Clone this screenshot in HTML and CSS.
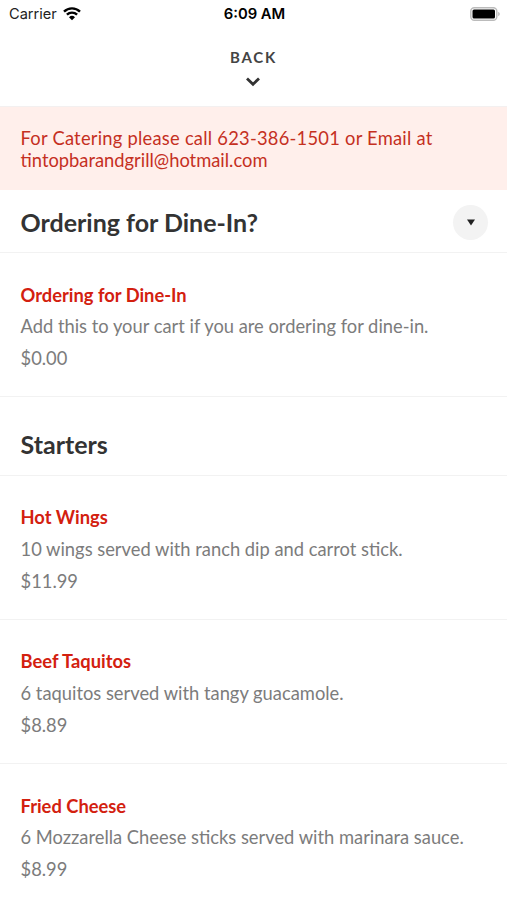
FILE: index.html
```html
<!DOCTYPE html>
<html lang="en">
<head>
  <meta charset="UTF-8">
  <title>Menu</title>
  <link rel="stylesheet" href="styles.css">
</head>
<body>
  <div class="status">
    <div class="carrier">
      <span>Carrier</span>
      <svg class="wifi" width="18" height="14" viewBox="0 0 18 14">
        <path d="M1 4.600a11.500 11.500 0 0 1 16 0M3.900 7.700a7.400 7.400 0 0 1 10.200 0" fill="none" stroke="#000" stroke-width="2.400"/>
        <path d="M9 13.200L6 10.200a4.300 4.300 0 0 1 6 0z"/>
      </svg>
    </div>
    <div class="time">6:09 AM</div>
    <svg class="battery" width="30" height="14" viewBox="0 0 30 14">
      <rect x=".8" y=".7" width="26" height="12.600" rx="3.500" fill="none" stroke="#bbb" stroke-width="1.400"/>
      <rect x="2.500" y="2.400" width="22.500" height="9.200" rx="1.500"/>
      <path d="M28.200 4.800q1.600.8 1.600 2.200t-1.600 2.200z" fill="#bbb"/>
    </svg>
  </div>

  <header class="header">
    <div class="back">BACK</div>
    <svg class="chevron" width="14" height="10" viewBox="0 0 14 10">
      <path d="M1 1.500l6 5.700 6-5.700" fill="none" stroke="#333" stroke-width="2.800"/>
    </svg>
  </header>

  <div class="notice"><span class="wide">For Catering please call 623-386-1501 or Email at</span> tintopbarandgrill@hotmail.com</div>

  <div class="section first">
    <h2>Ordering for Dine-In?</h2>
    <div class="toggle">
      <svg width="8" height="7" viewBox="0 0 8 7"><path d="M0 .5h8l-4 6z" fill="#222"/></svg>
    </div>
  </div>
  <div class="item">
    <h3>Ordering for Dine-In</h3>
    <p>Add this to your cart if you are ordering for dine-in.</p>
    <p>$0.00</p>
  </div>

  <div class="section">
    <h2>Starters</h2>
  </div>
  <div class="item">
    <h3>Hot Wings</h3>
    <p>10 wings served with ranch dip and carrot stick.</p>
    <p>$11.99</p>
  </div>
  <div class="item">
    <h3>Beef Taquitos</h3>
    <p>6 taquitos served with tangy guacamole.</p>
    <p>$8.89</p>
  </div>
  <div class="item">
    <h3>Fried Cheese</h3>
    <p>6 Mozzarella Cheese sticks served with marinara sauce.</p>
    <p>$8.99</p>
  </div>
</body>
</html>
```
FILE: styles.css
```css
* { box-sizing: border-box; }
body { margin: 0; height: 900px; overflow: hidden; background: #fff; color: #333; font-family: Lato, sans-serif; }
h2, h3, p { margin: 0; }
svg { display: block; }

/* status bar */
.status { display: grid; grid-template-columns: 1fr auto 1fr; align-items: center; height: 27px; padding: 0 7px 0 9px; color: #000; font: 14.6px/27px Inter, sans-serif; }
.carrier { display: flex; align-items: center; gap: 6px; }
.carrier span { padding-top: 1px; color: #222; line-height: 26px; }
.time { padding-top: 1px; font-weight: 600; font-size: 14.8px; line-height: 26px; }
.battery { justify-self: end; }

.header { display: flex; flex-direction: column; align-items: center; height: 80px; padding-top: 20px; border-bottom: 1px solid #f3f0f0; }
.back { margin-bottom: 10px; color: #444; font-size: 15px; font-weight: 700; line-height: 20px; letter-spacing: 1.8px; }
.chevron { margin-right: 1px; }

.notice { height: 83px; padding: 20px 20.5px; background: #ffefeb; color: #c5301f; font-size: 18.33px; line-height: 22px; }
.wide { letter-spacing: .24px; }

/* menu */
.section { display: flex; align-items: center; justify-content: space-between; height: 78.4px; padding: 17px 19px 0 20.5px; border-bottom: 1px solid #f2f2f2; }
.section.first { height: 63px; padding-top: 2px; }
.section h2 { font-size: 25px; font-weight: 700; line-height: 30px; }
.section.first h2 { line-height: 28px; }
.toggle { display: flex; align-items: center; justify-content: center; width: 35px; height: 35px; border-radius: 50%; background: #f3f3f3; }

.item { height: 144.3px; padding: 26.5px 20.5px 0; border-bottom: 1px solid #f2f2f2; font-size: 18.33px; line-height: 31.7px; }
.item h3 { color: #d3200f; font-size: 18.33px; font-weight: 700; }
.item p { color: #7c7c7c; }
```
